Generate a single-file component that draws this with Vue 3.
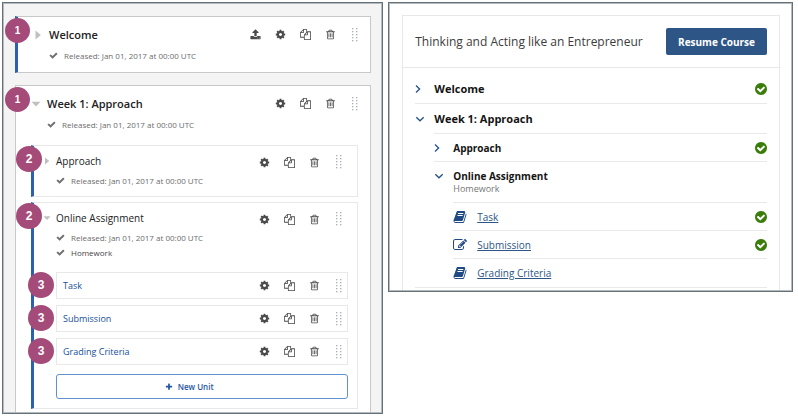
<script setup>
import { h, ref } from 'vue'

const paths = {
  check: 'M1671 566q0 40-28 68l-724 724-136 136q-28 28-68 28t-68-28l-136-136-362-362q-28-28-28-68t28-68l136-136q28-28 68-28t68 28l294 295 656-657q28-28 68-28t68 28l136 136q28 28 28 68z',
  cog: 'M1152 896q0-106-75-181t-181-75-181 75-75 181 75 181 181 75 181-75 75-181zm512-109v222q0 12-8 23t-20 13l-185 28q-19 54-39 91 35 50 107 138 10 12 10 25t-9 23q-27 37-99 108t-94 71q-12 0-26-9l-138-108q-44 23-91 38-16 136-29 186-7 28-36 28h-222q-14 0-24.5-8.5t-11.5-21.5l-28-184q-49-16-90-37l-141 107q-10 9-25 9-14 0-25-11-126-114-165-168-7-10-7-23 0-12 8-23 15-21 51-66.5t54-70.5q-27-50-41-99l-183-27q-13-2-21-12.5t-8-23.5v-222q0-12 8-23t19-13l186-28q14-46 39-92-40-57-107-138-10-12-10-24 0-10 9-23 26-36 98.5-107.5t94.5-71.5q13 0 26 10l138 107q44-23 91-38 16-136 29-186 7-28 36-28h222q14 0 24.5 8.5t11.5 21.5l28 184q49 16 90 37l142-107q9-9 24-9 13 0 25 10 129 119 165 170 7 8 7 22 0 12-8 23-15 21-51 66.5t-54 70.5q26 50 41 98l183 28q13 2 21 12.5t8 23.5z',
  copy: 'M1696 384q40 0 68 28t28 68v1216q0 40-28 68t-68 28h-960q-40 0-68-28t-28-68v-288h-544q-40 0-68-28t-28-68v-672q0-40 20-88t48-76l408-408q28-28 76-48t88-20h416q40 0 68 28t28 68v328q68-40 128-40h416zm-544 213l-299 299h299v-299zm-640-384l-299 299h299v-299zm196 647l316-316v-416h-384v416q0 40-28 68t-68 28h-416v640h512v-256q0-40 20-88t48-76zm956 804v-1152h-384v416q0 40-28 68t-68 28h-416v640h896z',
  trash: 'M704 736v576q0 14-9 23t-23 9h-64q-14 0-23-9t-9-23v-576q0-14 9-23t23-9h64q14 0 23 9t9 23zm256 0v576q0 14-9 23t-23 9h-64q-14 0-23-9t-9-23v-576q0-14 9-23t23-9h64q14 0 23 9t9 23zm256 0v576q0 14-9 23t-23 9h-64q-14 0-23-9t-9-23v-576q0-14 9-23t23-9h64q14 0 23 9t9 23zm128 724v-948h-896v948q0 22 7 40.5t14.5 27 10.5 8.5h832q3 0 10.5-8.5t14.5-27 7-40.5zm-672-1076h448l-48-117q-7-9-17-11h-317q-10 2-17 11zm928 32v64q0 14-9 23t-23 9h-96v948q0 83-47 143.5t-113 60.5h-832q-66 0-113-58.5t-47-141.5v-952h-96q-14 0-23-9t-9-23v-64q0-14 9-23t23-9h309l70-167q15-37 54-63t79-26h320q40 0 79 26t54 63l70 167h309q14 0 23 9t9 23z',
  upload: 'M1344 1472q0-26-19-45t-45-19-45 19-19 45 19 45 45 19 45-19 19-45zm256 0q0-26-19-45t-45-19-45 19-19 45 19 45 45 19 45-19 19-45zm128-224v320q0 40-28 68t-68 28h-1472q-40 0-68-28t-28-68v-320q0-40 28-68t68-28h427q21 56 70.5 92t110.5 36h256q61 0 110.5-36t70.5-92h427q40 0 68 28t28 68zm-325-648q-17 40-59 40h-256v448q0 26-19 45t-45 19h-256q-26 0-45-19t-19-45v-448h-256q-42 0-59-40-17-39 14-69l448-448q18-19 45-19t45 19l448 448q31 30 14 69z',
  done: 'M1412 734q0-28-18-46l-91-90q-19-19-45-19t-45 19l-408 407-226-226q-19-19-45-19t-45 19l-91 90q-18 18-18 46 0 27 18 45l362 362q19 19 45 19 27 0 46-19l543-543q18-18 18-45zm252 162q0 209-103 385.5t-279.5 279.5-385.5 103-385.5-103-279.5-279.5-103-385.5 103-385.5 279.5-279.5 385.5-103 385.5 103 279.5 279.5 103 385.5z',
  pencil: 'M888 1184l116-116-152-152-116 116v56h96v96h56zm440-720q-16-16-33 1l-350 350q-17 17-1 33t33-1l350-350q17-17 1-33zm80 594v190q0 119-84.5 203.5t-203.5 84.5h-832q-119 0-203.5-84.5t-84.5-203.5v-832q0-119 84.5-203.5t203.5-84.5h832q63 0 117 25 15 7 18 23 3 17-9 29l-49 49q-14 14-32 8-23-6-45-6h-832q-66 0-113 47t-47 113v832q0 66 47 113t113 47h832q66 0 113-47t47-113v-126q0-13 9-22l64-64q15-15 35-7t20 29zm-96-738l288 288-672 672h-288v-288zm444 132l-92 92-288-288 92-92q28-28 68-28t68 28l152 152q28 28 28 68t-28 68z',
  book: 'M1703 478q40 57 18 129l-275 906q-19 64-76.5 107.5t-122.5 43.5h-923q-77 0-148.5-53.5t-99.5-131.5q-24-67-2-127 0-4 3-27t4-37q1-8-3-21.5t-3-19.5q2-11 8-21t16.5-23.5 16.5-23.5q23-38 45-91.5t30-91.5q3-10 .5-30t-.5-28q3-11 17-28t17-23q21-36 42-92t25-90q1-9-2.5-32t.5-28q4-13 22-30.5t22-22.5q19-26 42.5-84.5t27.5-96.5q1-8-3-25.5t-2-26.5q2-8 9-18t18-23 17-21q8-12 16.5-30.5t15-35 16-36 19.5-32 26.5-23.5 36-11.5 47.5 5.5l-1 3q38-9 51-9h761q74 0 114 56t18 130l-274 906q-36 119-71.5 153.5t-128.5 34.5h-869q-27 0-38 15-11 16-1 43 24 70 144 70h923q29 0 56-15.5t35-41.5l300-987q7-22 5-57 38 15 59 43zm-1064 2q-4 13 2 22.5t20 9.5h608q13 0 25.5-9.5t16.5-22.5l21-64q4-13-2-22.5t-20-9.5h-608q-13 0-25.5 9.5t-16.5 22.5zm-83 256q-4 13 2 22.5t20 9.5h608q13 0 25.5-9.5t16.5-22.5l21-64q4-13-2-22.5t-20-9.5h-608q-13 0-25.5 9.5t-16.5 22.5z',
  right: 'M448 96v1600l960-800z',
  down: 'M96 480h1600l-800 880z',
  plus: 'M1600 736v192q0 40-28 68t-68 28h-416v416q0 40-28 68t-68 28h-192q-40 0-68-28t-28-68v-416h-416q-40 0-68-28t-28-68v-192q0-40 28-68t68-28h416v-416q0-40 28-68t68-28h192q40 0 68 28t28 68v416h416q40 0 68 28t28 68z'
}

const Icon = (props) =>
  h(
    'svg',
    { viewBox: props.name === 'done' ? '128 128 1536 1536' : '0 0 1792 1792', fill: 'currentColor', 'aria-hidden': 'true' },
    [h('path', { d: paths[props.name] })]
  )
Icon.props = ['name']

const Chevron = (props) =>
  h(
    'svg',
    { viewBox: '0 0 10 10', fill: 'none', stroke: 'currentColor', 'stroke-width': '1.3', 'aria-hidden': 'true' },
    [h('path', { d: props.open ? 'M1.3 3.2 5 6.8 8.7 3.2' : 'M1 1.5 4.6 5 1 8.5' })]
  )
Chevron.props = { open: Boolean }

const labels = { upload: 'Publish', cog: 'Configure', copy: 'Duplicate', trash: 'Delete' }
const Actions = (props) =>
  h('div', { class: 'actions' }, [
    ...(props.publish ? ['upload', 'cog', 'copy', 'trash'] : ['cog', 'copy', 'trash']).map((name) =>
      h('button', { type: 'button', class: ['action', name], 'aria-label': labels[name] }, [h(Icon, { name })])
    ),
    h(
      'svg',
      { class: 'grip', viewBox: '0 0 6 16', 'aria-hidden': 'true' },
      [0, 1, 2, 3, 4].flatMap((row) =>
        [0, 4].map((x) => h('rect', { x, y: 1 + row * 3, width: 1.4, height: 1.3, fill: '#adb0ba' }))
      )
    )
  ])
Actions.props = { publish: Boolean }

const released = 'Released: Jan 01, 2017 at 00:00 UTC'
const sections = ref([
  { title: 'Welcome', open: false, live: true, subsections: [] },
  {
    title: 'Week 1: Approach',
    open: true,
    live: false,
    subsections: [
      { title: 'Approach', open: false, notes: [], units: [] },
      {
        title: 'Online Assignment',
        open: true,
        notes: ['Homework'],
        units: ['Task', 'Submission', 'Grading Criteria']
      }
    ]
  }
])

const lessons = [
  { title: 'Task', icon: 'book', done: true },
  { title: 'Submission', icon: 'pencil', done: true },
  { title: 'Grading Criteria', icon: 'book', done: false }
]
</script>

<template>
  <main class="page">
    <section class="panel editor" aria-label="Course editor">
      <article
        v-for="section in sections"
        :key="section.title"
        class="card section"
        :class="{ live: section.live, expanded: section.open }"
      >
        <span class="badge">1</span>
        <header class="head">
          <button type="button" class="toggle" :aria-expanded="section.open" :aria-label="'Toggle ' + section.title">
            <Icon :name="section.open ? 'down' : 'right'" />
          </button>
          <h2 class="title">{{ section.title }}</h2>
          <Actions :publish="section.live" />
        </header>
        <p class="status"><Icon name="check" />{{ released }}</p>

        <div v-if="section.open" class="subsections">
          <article v-for="sub in section.subsections" :key="sub.title" class="card subsection">
            <span class="badge">2</span>
            <header class="head">
              <button type="button" class="toggle" :aria-expanded="sub.open" :aria-label="'Toggle ' + sub.title">
                <Icon :name="sub.open ? 'down' : 'right'" />
              </button>
              <h3 class="title">{{ sub.title }}</h3>
              <Actions />
            </header>
            <p class="status"><Icon name="check" />{{ released }}</p>
            <p v-for="note in sub.notes" :key="note" class="status note"><Icon name="check" />{{ note }}</p>

            <div v-if="sub.open" class="units">
              <div v-for="unit in sub.units" :key="unit" class="unit">
                <span class="badge">3</span>
                <a href="#" class="unit-name">{{ unit }}</a>
                <Actions />
              </div>
              <button type="button" class="new-unit"><Icon name="plus" />New Unit</button>
            </div>
          </article>
        </div>
      </article>
    </section>

    <section class="panel viewer" aria-label="Course outline">
      <div class="course">
        <header class="course-head">
          <h1 class="course-title">Thinking and Acting like an Entrepreneur</h1>
          <button type="button" class="resume">Resume Course</button>
        </header>
        <div class="outline">
          <div class="row top">
            <button type="button" class="fold"><Chevron /><span>Welcome</span></button>
            <Icon name="done" class="done" />
          </div>
          <div class="group">
            <div class="row top open">
              <button type="button" class="fold"><Chevron open /><span>Week 1: Approach</span></button>
            </div>
            <div class="nested">
              <div class="row">
                <button type="button" class="fold small"><Chevron /><span>Approach</span></button>
                <Icon name="done" class="done" />
              </div>
              <div class="assignment">
                <button type="button" class="fold small"><Chevron open /><span>Online Assignment</span></button>
                <p class="kind">Homework</p>
              </div>
              <ul class="nested lessons">
                <li v-for="lesson in lessons" :key="lesson.title" class="row">
                  <Icon :name="lesson.icon" class="lesson-icon" />
                  <a href="#" class="lesson-link">{{ lesson.title }}</a>
                  <Icon v-if="lesson.done" name="done" class="done" />
                </li>
              </ul>
            </div>
          </div>
        </div>
      </div>
    </section>
  </main>
</template>

<style>
body {
  background: #fff;
}
</style>

<style scoped>
.page {
  display: flex;
  align-items: flex-start;
  gap: 5px;
  padding: 2px 5px 2px 2px;
  font-family: 'Open Sans', 'Noto Sans', sans-serif;
  color: #222;
}
.page :deep(*) {
  box-sizing: border-box;
}
.page :deep(button) {
  margin: 0;
  padding: 0;
  border: 0;
  background: none;
  font-family: inherit;
  color: inherit;
  cursor: pointer;
}
.page :deep(svg) {
  display: block;
  flex: none;
}
h1, h2, h3, p, ul {
  margin: 0;
  padding: 0;
}
.panel {
  border: 1px solid #667077;
  box-shadow: inset 0 0 0 1px #b4babd;
  min-width: 0;
}
.editor {
  width: 48.2%;
  flex: none;
  display: flex;
  flex-direction: column;
  gap: 12px;
  padding: 13px 11px 1px 12px;
  background: #f4f4f4;
}
.viewer {
  flex: 1;
  padding: 12px 12px 1px 13px;
  background: #fff;
}

/* Editor cards */
.card {
  position: relative;
  background: #fff;
}
.section {
  padding: 4px 12px 9px 15px;
  border: 1px solid #c8c8c8;
}
.section.live {
  border-left: 3px solid #2a62ae;
}
.section.expanded {
  padding-bottom: 3px;
  border-bottom: 0;
}
.head {
  display: flex;
  align-items: center;
  height: 27px;
}
.head .toggle {
  width: 10px;
  height: 10px;
  margin-right: 6px;
}
.toggle svg {
  width: 10px;
  height: 10px;
  color: #c0c0c0;
}
.title {
  flex: 1;
  min-width: 0;
  font-size: 11px;
  font-weight: 600;
  line-height: 18px;
}
.status {
  display: flex;
  align-items: center;
  gap: 6px;
  padding-left: 16px;
  font-size: 8px;
  font-weight: 400;
  line-height: 15px;
  color: #6c6c6c;
}
.status svg {
  width: 9px;
  height: 9px;
  color: #707070;
}
.status.note {
  color: #444;
}
:deep(.actions) {
  display: flex;
  align-items: center;
  gap: 14px;
  color: #4a4a4a;
}
:deep(.action) {
  width: 11px;
  height: 11px;
}
:deep(.action svg) {
  width: 11px;
  height: 11px;
}
:deep(.grip) {
  width: 6px;
  height: 16px;
  margin-left: 2px;
}
.subsections {
  display: flex;
  flex-direction: column;
  gap: 5px;
  margin-top: 13px;
}
.subsection {
  padding: 3px 15px 8px 8px;
  border: 1px solid #e8e8e8;
  border-left: 3px solid #2a62ae;
}
.subsection .head {
  height: 24px;
}
.subsection .head .toggle {
  margin-right: 4px;
}
.subsection .toggle svg {
  width: 8px;
  height: 8px;
  margin: 1px;
}
.subsection .head :deep(.actions) {
  padding-top: 2px;
}
.subsection .title {
  font-size: 10px;
  font-weight: 400;
}
.subsection .status {
  padding-left: 14px;
}
.units {
  display: flex;
  flex-direction: column;
  gap: 6px;
  margin: 12px -6px 1px 14px;
}
.unit {
  position: relative;
  display: flex;
  align-items: center;
  height: 27px;
  padding: 0 5px 0 6px;
  border: 1px solid #e8e8e8;
}
.unit-name {
  flex: 1;
  font-size: 9px;
  line-height: 14px;
  color: #174f9a;
  text-decoration: none;
}
.page .new-unit {
  display: flex;
  align-items: center;
  justify-content: center;
  gap: 5px;
  height: 25px;
  margin-top: 3px;
  padding-right: 26px;
  border: 1px solid #5f92cc;
  border-radius: 3px;
  background: #fff;
  font-size: 8px;
  font-weight: 600;
  color: #1f569f;
}
.new-unit svg {
  width: 8px;
  height: 8px;
}

/* Numbered markers laid over the left edge of each card */
.badge {
  position: absolute;
  top: 0;
  left: -18px;
  z-index: 1;
  width: 26px;
  height: 26px;
  border-radius: 50%;
  background: #a54b79;
  font-family: 'Liberation Sans', Arial, sans-serif;
  font-size: 12px;
  font-weight: 700;
  line-height: 26px;
  text-align: center;
  color: #fff;
}
.section > .badge {
  top: 1px;
  left: -11px;
  width: 25px;
  height: 25px;
  font-size: 10px;
  line-height: 25px;
}
.section.live > .badge {
  left: -13px;
}
.unit > .badge {
  top: -1px;
  left: -29px;
}

/* Learner outline */
.course {
  border: 1px solid #e6e8ea;
  border-bottom: 0;
}
.course-head {
  display: flex;
  align-items: center;
  justify-content: space-between;
  padding: 12px;
  border-bottom: 1px solid #e6e8ea;
}
.course-title {
  font-size: 12px;
  font-weight: 400;
  line-height: 18px;
  color: #3c3c3c;
}
.page .resume {
  height: 27px;
  padding: 0 12px;
  border-radius: 2px;
  background: #2d5686;
  font-size: 10px;
  font-weight: 700;
  color: #fff;
}
.outline {
  padding: 7px 12px 2px 12px;
}
.row {
  display: flex;
  align-items: center;
  height: 28px;
  border-bottom: 1px solid #e9e9e9;
}
.row.top {
  height: 29px;
}
.row.open {
  height: 30px;
  margin-left: 19px;
}
.row.open .fold {
  margin-left: -19px;
}
.group {
  border-bottom: 1px solid #e9e9e9;
}
.nested {
  margin-left: 19px;
}
.page .fold {
  display: flex;
  align-items: center;
  gap: 9px;
  font-size: 11px;
  font-weight: 700;
  line-height: 18px;
  color: #141414;
}
.page .fold.small {
  font-size: 10px;
  line-height: 14px;
}
.fold svg {
  width: 10px;
  height: 10px;
  color: #24508c;
}
.done {
  width: 12px;
  height: 12px;
  margin-left: auto;
  color: #3a7d0a;
}
.assignment {
  height: 40px;
  padding-top: 7px;
}
.kind {
  margin-left: 19px;
  font-size: 9px;
  line-height: 12px;
  color: #777;
}
.lessons {
  list-style: none;
  border-top: 1px solid #e9e9e9;
}
.lessons .row {
  height: 28px;
}
.lessons .row:last-child {
  border-bottom: 0;
}
.lesson-icon {
  width: 14px;
  height: 14px;
  margin-right: 10px;
  color: #204a83;
}
.lesson-link {
  font-size: 10px;
  line-height: 16px;
  color: #2d5686;
  text-decoration: underline;
}
</style>
